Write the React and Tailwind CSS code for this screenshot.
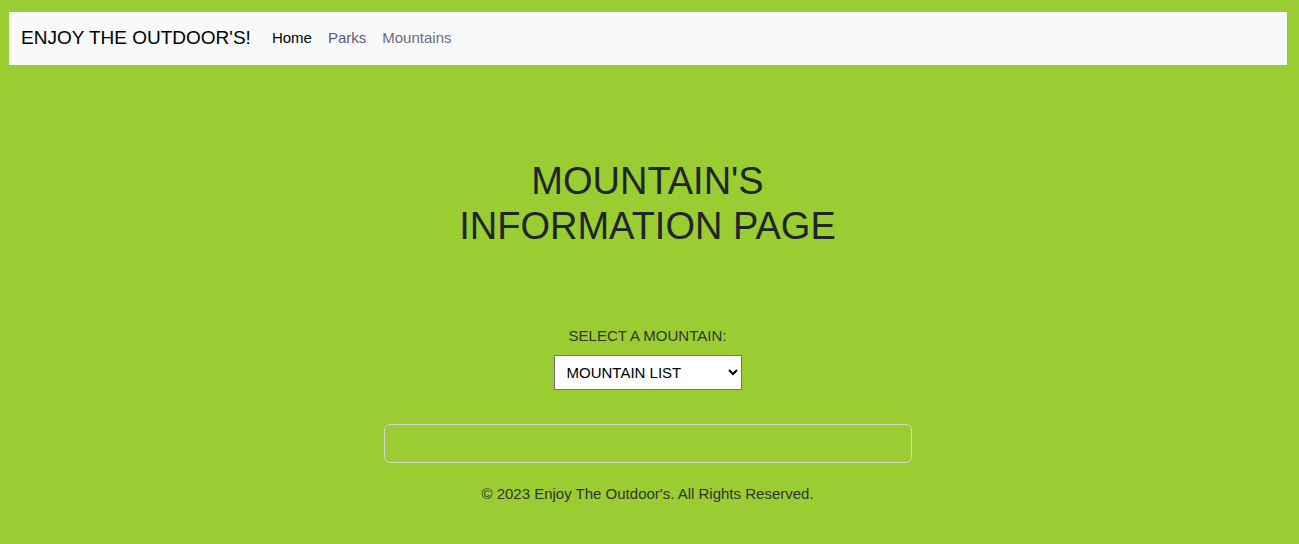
import React from 'react'

export default function App() {
  return (
    <div className="min-h-[544px] bg-[#9acd32] pt-3 pb-10 font-['Liberation_Sans',Arial,sans-serif] text-[#212529]">
      {/* ── Navbar ── */}
      <nav className="ml-[9px] mr-3 h-[53px] bg-[#f8f9fa] flex items-center px-3">
        <span className="text-[19px] text-black mr-[21px]">ENJOY THE OUTDOOR'S!</span>
        <a href="#" className="text-[15px] text-black mr-4">Home</a>
        <a href="#" className="text-[15px] text-[#5a5a7a] mr-4">Parks</a>
        <a href="#" className="text-[15px] text-[#6c6c80]">Mountains</a>
      </nav>

      {/* ── Main ── */}
      <main className="flex flex-col items-center pr-1">
        <h1 className="mt-[94px] max-w-[400px] text-center text-[38px] leading-[45px] text-[#212529]">
          MOUNTAIN'S INFORMATION PAGE
        </h1>

        <label className="mt-[76px] text-[15px] text-[#333]">SELECT A MOUNTAIN:</label>
        <select className="mt-[7px] w-[188px] h-[35px] bg-white border border-[#767676] text-[15px] text-black px-2">
          <option>MOUNTAIN LIST</option>
        </select>

        <div className="mt-[34px] w-[528px] h-[39px] border border-[#d0d6c6] rounded-[6px]" />

        <p className="mt-[20px] text-[15px] text-[#333]">© 2023 Enjoy The Outdoor's. All Rights Reserved.</p>
      </main>
    </div>
  )
}
